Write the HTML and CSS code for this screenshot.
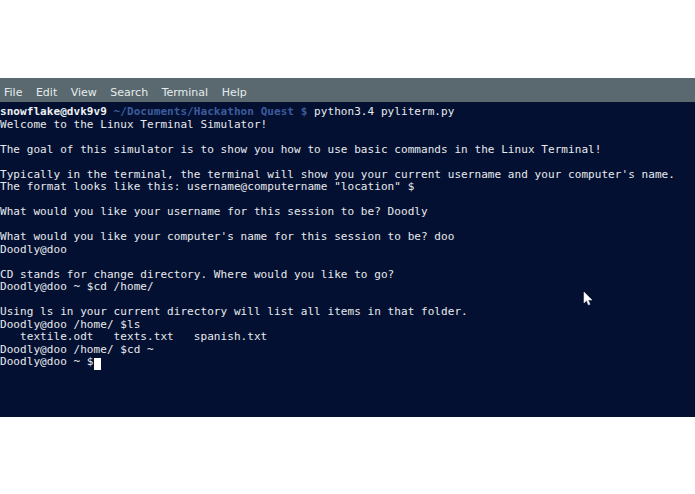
FILE: index.html
```html
<!DOCTYPE html>
<html lang="en">
<head>
    <meta charset="UTF-8">
    <title>Terminal</title>
    <link rel="stylesheet" href="styles.css">
</head>
<body>
    <div class="window">
        <div class="menubar">
            <span class="menu-item">File</span>
            <span class="menu-item">Edit</span>
            <span class="menu-item">View</span>
            <span class="menu-item">Search</span>
            <span class="menu-item">Terminal</span>
            <span class="menu-item">Help</span>
        </div>

        <!-- terminal output -->
        <div class="terminal">
<pre class="output"><b class="user">snowflake@dvk9v9</b> <b class="path">~/Documents/Hackathon Quest $</b> python3.4 pyliterm.py
Welcome to the Linux Terminal Simulator!

The goal of this simulator is to show you how to use basic commands in the Linux Terminal!

Typically in the terminal, the terminal will show you your current username and your computer's name.
The format looks like this: username@computername "location" $

What would you like your username for this session to be? Doodly

What would you like your computer's name for this session to be? doo
Doodly@doo

CD stands for change directory. Where would you like to go?
Doodly@doo ~ $cd /home/

Using ls in your current directory will list all items in that folder.
Doodly@doo /home/ $ls
   textile.odt   texts.txt   spanish.txt
Doodly@doo /home/ $cd ~
Doodly@doo ~ $<span class="cursor"> </span></pre>

            <svg class="pointer" width="11" height="16" viewBox="0 0 11 16">
                <path d="M1 1 L1 12 L3.5 9.5 L5.5 14 L7 13.3 L5.2 9 L9 9 Z" fill="#ffffff" stroke="#d8d8d8" stroke-width="0.6"/>
            </svg>
        </div>
    </div>
</body>
</html>
```

FILE: styles.css
```css
* {
    margin: 0;
    padding: 0;
    box-sizing: border-box;
}

body {
    width: 695px;
    height: 494px;
    background-color: #ffffff;
    font-family: "DejaVu Sans", sans-serif;
}

.window {
    padding-top: 78px;
}

.menubar {
    height: 24px;
    display: flex;
    align-items: center;
    padding: 4px 0 0 4px;
    background-color: #59696f;
    color: #e6ecee;
    font-size: 11px;
}

.menu-item {
    margin-right: 13.5px;
}

.terminal {
    position: relative;
    height: 315px;
    padding-top: 4px;
    background-color: #031031;
}

.output {
    font-family: "DejaVu Sans Mono", monospace;
    font-size: 11px;
    line-height: 12.5px;
    letter-spacing: 0.06px;
    color: #e8eaee;
    white-space: pre;
}

.user {
    color: #eef0f3;
}

.path {
    color: #3d5b9c;
}

.cursor {
    display: inline-block;
    width: 7px;
    height: 12px;
    vertical-align: -2px;
    background-color: #ffffff;
}

.pointer {
    position: absolute;
    left: 583px;
    top: 189px;
}
```
